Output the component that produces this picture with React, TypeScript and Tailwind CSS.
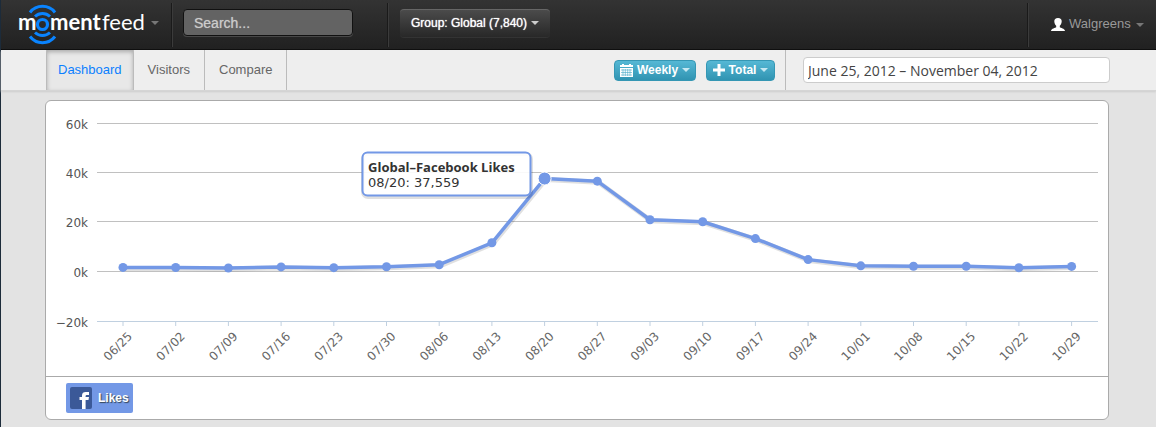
import { Fragment } from 'react';

const tabs = ['Dashboard', 'Visitors', 'Compare'];

const gridLines = [
  { label: '60k', y: 124 },
  { label: '40k', y: 173 },
  { label: '20k', y: 222 },
  { label: '0k', y: 272 },
];

const likes = [
  { week: '06/25', total: 1650 },
  { week: '07/02', total: 1600 },
  { week: '07/09', total: 1400 },
  { week: '07/16', total: 1850 },
  { week: '07/23', total: 1550 },
  { week: '07/30', total: 1900 },
  { week: '08/06', total: 2750 },
  { week: '08/13', total: 11600 },
  { week: '08/20', total: 37559 },
  { week: '08/27', total: 36500 },
  { week: '09/03', total: 20900 },
  { week: '09/10', total: 20100 },
  { week: '09/17', total: 13300 },
  { week: '09/24', total: 4800 },
  { week: '10/01', total: 2300 },
  { week: '10/08', total: 2100 },
  { week: '10/15', total: 2100 },
  { week: '10/22', total: 1500 },
  { week: '10/29', total: 2050 },
];

const points = likes.map((item, i) => ({
  ...item,
  x: 123 + i * 52.7,
  y: 271.5 - (item.total / 20000) * 49.5,
}));

const line = points.map((p) => `${p.x},${p.y}`).join(' ');

function Caret({ className }: { className: string }) {
  return (
    <svg viewBox="0 0 8 4" className={`w-2 h-1 ${className}`} fill="currentColor" aria-hidden="true">
      <path d="M0 0h8L4 4z" />
    </svg>
  );
}

function Logo() {
  return (
    <svg viewBox="0 0 130 42" className="w-[130px] h-[42px]" role="img" aria-label="momentfeed">
      <g fill="none" stroke="#0a84ff">
        <path d="M12 8.500A15.800 15.800 0 0 1 37 8.500" strokeWidth="3" />
        <path d="M17 12.500A11 11 0 0 1 32 12.500" strokeWidth="3" />
        <path d="M17 28.500A11 11 0 0 0 32 28.500" strokeWidth="3" />
        <path d="M12 32.500A15.800 15.800 0 0 0 37 32.500" strokeWidth="3" />
        <circle cx="24.500" cy="20.500" r="5" strokeWidth="3.200" />
      </g>
      <g fill="#fff" fontFamily="Lato, sans-serif" fontSize="22">
        <text x="0" y="26" fontWeight="700">m</text>
        <text x="32" y="26" fontWeight="700">ment</text>
        <text x="84" y="26" fontWeight="400">feed</text>
      </g>
    </svg>
  );
}

function CalendarIcon() {
  return (
    <svg viewBox="0 0 13 13" className="w-[13px] h-[13px]" aria-hidden="true">
      <path fill="#fff" d="M2 0h2v1h5V0h2v1h2v2H0V1h2zM0 4h13v9H0z" />
      <path stroke="#46a9c8" strokeWidth=".6" d="M1 6h11M1 8.500h11M1 11h11M3 5v7M5.300 5v7M7.700 5v7M10 5v7" />
    </svg>
  );
}

function PlusIcon() {
  return (
    <svg viewBox="0 0 12 12" className="w-3 h-3" fill="#fff" aria-hidden="true">
      <path d="M4.500 0h3v4.500H12v3H7.500V12h-3V7.500H0v-3h4.500z" />
    </svg>
  );
}

function UserIcon() {
  return (
    <svg viewBox="0 0 14 13" className="w-3.5 h-[13px]" fill="#fff" aria-hidden="true">
      <path d="M7 0C4.500 0 3.200 1.400 3.300 3.600c.1 1.900.9 3.400 1.900 4.200v1.400C4.500 10 .3 10.200 0 13h14c-.3-2.800-4.500-3-5.200-3.800V7.800c1-.8 1.800-2.300 1.900-4.200C10.800 1.400 9.500 0 7 0z" />
    </svg>
  );
}

function FacebookIcon() {
  return (
    <svg viewBox="0 0 22 22" className="w-[22px] h-[22px]" aria-hidden="true">
      <rect width="22" height="22" rx="2" fill="#3b5998" />
      <path
        fill="#fff"
        d="M12 22v-9H9.500v-3H12V8.500C12 6 13.400 5 15.800 5H19v3h-1.800c-1.200 0-1.600.4-1.600 1.200V10H19l-.5 3h-2.900v9z"
      />
    </svg>
  );
}

function Header() {
  return (
    <header className="flex h-[50px] items-center border-b border-black bg-linear-to-b from-[#333] to-[#212121] font-['Liberation_Sans',sans-serif] text-sm">
      <div className="flex h-full w-[170px] items-center justify-between pb-1 pl-[17px] pr-3">
        <a href="#home" className="pt-1">
          <Logo />
        </a>
        <Caret className="text-[#777]" />
      </div>
      <div className="h-11 w-0.5 border-l border-r border-l-[#1a1a1a] border-r-[#3b3b3b]" />
      <div className="pb-1 pl-2.5">
        <input
          type="search"
          aria-label="Search"
          placeholder="Search..."
          className="block h-[27px] w-[170px] rounded border border-[#111] bg-[#636363] px-2.5 shadow-[0_1px_0_#484848] outline-none placeholder:text-[#ccc] text-shadow-[0_0_1px_#aaa]"
        />
      </div>
      <div className="ml-[34px] h-11 w-0.5 border-l border-r border-l-[#1a1a1a] border-r-[#3b3b3b]" />
      <div className="pb-1 pl-[11px]">
        <button className="flex h-7 w-[150px] items-center justify-center gap-1 rounded border-t border-[#666] bg-linear-to-b from-[#4b4b4b] to-[#282828] text-xs text-white shadow-[0_1px_0_#333] text-shadow-[0_0_1px_#fff]">
          Group: Global (7,840)
          <Caret className="text-[#ccc]" />
        </button>
      </div>
      <div className="ml-auto h-11 w-0.5 border-l border-r border-l-[#1a1a1a] border-r-[#3b3b3b]" />
      <button className="flex w-[127px] items-center gap-1 pl-[22px] text-[13px] text-[#999]">
        <UserIcon />
        <span>Walgreens</span>
        <Caret className="ml-px text-[#777]" />
      </button>
    </header>
  );
}

function Toolbar() {
  return (
    <div className="flex h-[41px] items-center border-b border-[#d5d5d5] bg-[#eee] pl-[45px] pr-[46px] shadow-[0_1px_2px_#ccc]">
      <nav className="flex h-full font-['Liberation_Sans',sans-serif] text-[13px] text-[#666]">
        {tabs.map((tab, i) => (
          <a
            key={tab}
            href={`#${tab.toLowerCase()}`}
            className={
              i === 0
                ? 'flex items-center border-x border-[#bbb] bg-[#e8e8e8] px-[11px] text-[#0a7fff] shadow-[inset_0_2px_4px_#aaa]'
                : 'flex items-center border-r border-[#bbb] px-3.5'
            }
          >
            {tab}
          </a>
        ))}
      </nav>
      <div className="ml-auto flex gap-2.5 font-['Liberation_Sans',sans-serif] text-xs font-bold text-white">
        <button className="flex h-[21px] w-[82px] items-center justify-center gap-1 rounded border border-[#3597b4] bg-linear-to-b from-[#55b8d5] to-[#3094b2]">
          <CalendarIcon />
          <span>Weekly</span>
          <Caret className="text-[#c5e8f2]" />
        </button>
        <button className="flex h-[21px] w-[69px] items-center justify-center gap-1 rounded border border-[#3597b4] bg-linear-to-b from-[#55b8d5] to-[#3094b2]">
          <PlusIcon />
          <span>Total</span>
          <Caret className="text-[#c5e8f2]" />
        </button>
      </div>
      <div className="ml-2.5 h-full border-l border-[#bbb]" />
      <input
        type="text"
        aria-label="Date range"
        defaultValue="June 25, 2012 – November 04, 2012"
        className="ml-[17px] h-[26px] w-[307px] rounded border border-[#ccc] bg-white px-1 font-['Open_Sans',sans-serif] text-sm text-[#444] outline-none"
      />
    </div>
  );
}

function LikesChart() {
  return (
    <svg viewBox="46 101 1062 275" className="block w-full" role="img" aria-label="Global Facebook Likes by week">
      {gridLines.map((grid) => (
        <Fragment key={grid.label}>
          <path d={`M97 ${grid.y - 0.5}H1098`} stroke="#c0c0c0" />
          <text x="88" y={grid.y + 5} textAnchor="end" fontSize="12" fill="#555">
            {grid.label}
          </text>
        </Fragment>
      ))}
      <path d="M97 321.500H1098" stroke="#c0d0e0" />
      <text x="88" y="327" textAnchor="end" fontSize="12" fill="#555">
        −20k
      </text>
      {points.map((p) => (
        <Fragment key={p.week}>
          <path d={`M${p.x} 322v4`} stroke="#c0d0e0" />
          <text
            textAnchor="end"
            fontSize="12"
            fill="#666"
            transform={`translate(${p.x + 10} 337) rotate(-45)`}
          >
            {p.week}
          </text>
        </Fragment>
      ))}
      <polyline points={line} fill="none" stroke="#000" strokeOpacity=".12" strokeWidth="5" transform="translate(1 1)" />
      <polyline points={line} fill="none" stroke="#7398e6" strokeWidth="3.500" strokeLinejoin="round" />
      {points.map((p) => (
        <circle
          key={p.week}
          cx={p.x}
          cy={p.y}
          r={p.week === '08/20' ? 6.5 : 4.5}
          fill="#7398e6"
          stroke={p.week === '08/20' ? '#fff' : 'none'}
        />
      ))}
      <rect x="363" y="154" width="168" height="43" rx="5" fill="none" stroke="#000" strokeOpacity=".12" strokeWidth="4" />
      <rect x="362.500" y="152.500" width="168" height="43" rx="5" fill="#fff" fillOpacity=".9" stroke="#7398e6" strokeWidth="2" />
      <text x="368" y="172" fontFamily="'Open Sans', sans-serif" fontSize="13" fontWeight="700" fill="#333">
        Global–Facebook Likes
      </text>
      <text x="368" y="187" fontSize="13" fill="#333">
        08/20: 37,559
      </text>
    </svg>
  );
}

export default function App() {
  return (
    <div className="min-h-screen border-l border-[#1c2b3a] bg-[#e3e3e3] font-['DejaVu_Sans',sans-serif]">
      <Header />
      <Toolbar />
      <main className="ml-11 mr-[47px] mt-[9px] rounded-md border border-[#aaa] bg-white">
        <LikesChart />
        <div className="flex h-[43px] items-center border-t border-[#aaa] px-5">
          <button className="flex h-[30px] w-[67px] items-center gap-1.5 rounded-xs bg-[#7398e6] pl-1 font-['Liberation_Sans',sans-serif] text-xs font-bold text-white text-shadow-[1px_1px_1px_#345]">
            <FacebookIcon />
            Likes
          </button>
        </div>
      </main>
    </div>
  );
}
